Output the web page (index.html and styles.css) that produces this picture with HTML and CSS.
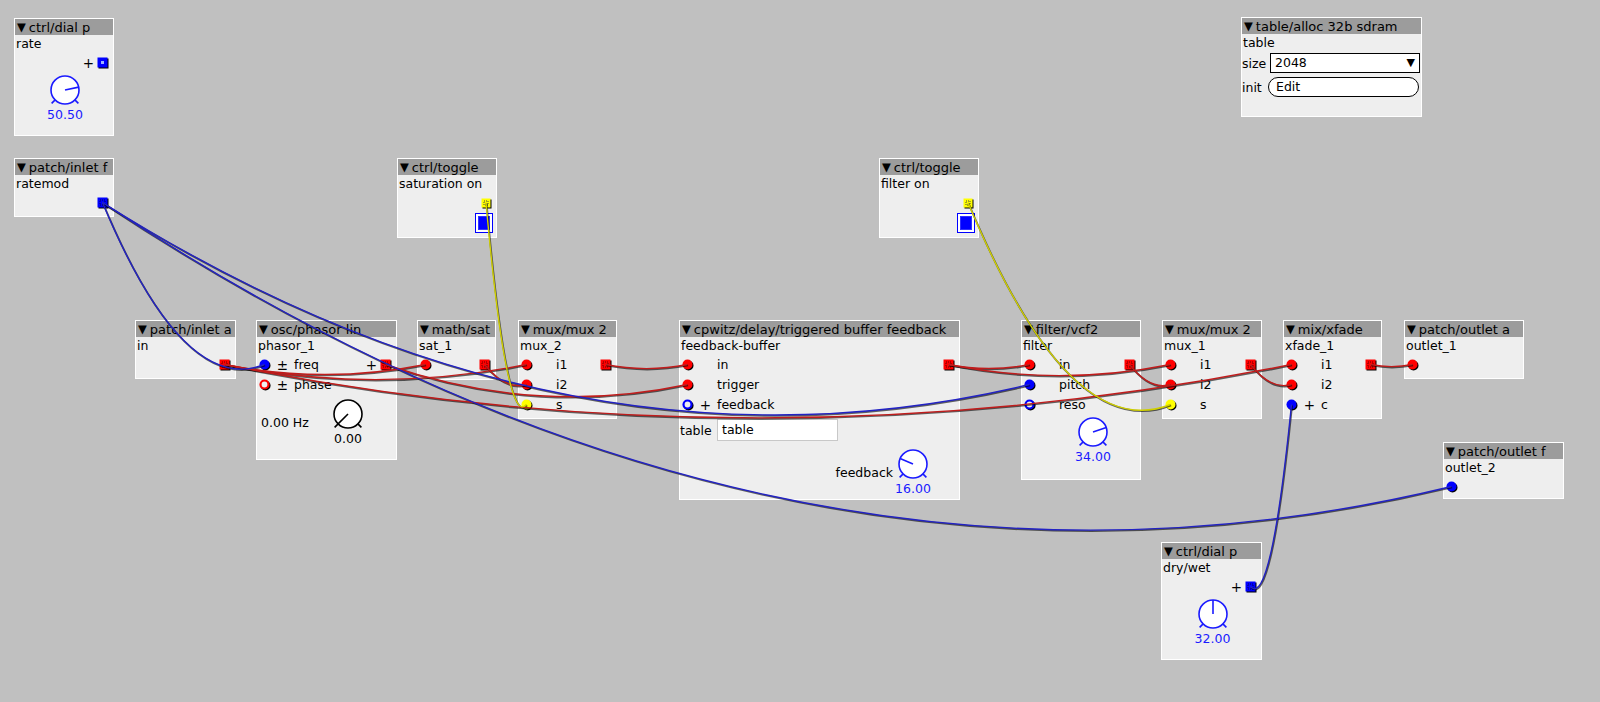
FILE: index.html
```html
<!DOCTYPE html>
<html>
<head>
<meta charset="utf-8">
<link rel="stylesheet" href="styles.css">
</head>
<body>
<div class="canvas">

  <!-- ctrl/dial p : rate -->
  <div class="obj o-dial1">
    <div class="title"><span class="tri">▼</span>ctrl/dial p</div>
    <div class="name">rate</div>
    <div class="row outrow"><span class="osign">+</span><svg class="pout" width="12" height="12"><rect x="1.5" y="1.5" width="10" height="10" fill="#000"/><rect x="0.5" y="0.5" width="10" height="10" fill="#0000ff"/><rect x="4" y="4" width="3" height="3" fill="#9fb4ff"/></svg></div>
    <div class="dialrow">
      <div class="dial">
        <svg width="40" height="34" viewBox="0 0 40 34"><g stroke="#1a1aff" stroke-width="1.6" fill="none"><circle cx="20" cy="16" r="14" fill="#fff"/><line x1="10.1" y1="25.9" x2="6.6" y2="29.4"/><line x1="29.9" y1="25.9" x2="33.4" y2="29.4"/><line x1="20" y1="16" x2="33.7" y2="13.1"/></g></svg>
        <div class="dval blue">50.50</div>
      </div>
    </div>
  </div>

  <!-- patch/inlet f -->
  <div class="obj o-inF">
    <div class="title"><span class="tri">▼</span>patch/inlet f</div>
    <div class="name">ratemod</div>
    <div class="row outrow"><svg class="pout" width="12" height="12"><rect x="1.5" y="1.5" width="10" height="10" fill="#000"/><rect id="inF_o" x="0.5" y="0.5" width="10" height="10" fill="#0000ff"/><rect x="3" y="3" width="5" height="5" fill="none" stroke="#000060" stroke-dasharray="1 1"/></svg></div>
  </div>

  <!-- ctrl/toggle saturation -->
  <div class="obj o-tgS">
    <div class="title"><span class="tri">▼</span>ctrl/toggle</div>
    <div class="name">saturation on</div>
    <div class="row outrow"><svg class="pout small" width="11" height="11"><rect x="1.5" y="1.5" width="9" height="9" fill="#000"/><rect id="tgS_o" x="0.5" y="0.5" width="9" height="9" fill="#ffff00"/><rect x="3" y="3" width="4" height="4" fill="none" stroke="#444" stroke-dasharray="1 1"/></svg></div>
    <div class="tgrow"><div class="toggle"><div class="tgin"></div></div></div>
  </div>

  <!-- ctrl/toggle filter -->
  <div class="obj o-tgF">
    <div class="title"><span class="tri">▼</span>ctrl/toggle</div>
    <div class="name">filter on</div>
    <div class="row outrow"><svg class="pout small" width="11" height="11"><rect x="1.5" y="1.5" width="9" height="9" fill="#000"/><rect id="tgF_o" x="0.5" y="0.5" width="9" height="9" fill="#ffff00"/><rect x="3" y="3" width="4" height="4" fill="none" stroke="#444" stroke-dasharray="1 1"/></svg></div>
    <div class="tgrow"><div class="toggle"><div class="tgin"></div></div></div>
  </div>

  <!-- patch/inlet a -->
  <div class="obj o-inA">
    <div class="title"><span class="tri">▼</span>patch/inlet a</div>
    <div class="name">in</div>
    <div class="row outrow"><svg class="pout" width="12" height="12"><rect x="1.5" y="1.5" width="10" height="10" fill="#000"/><rect id="inA_o" x="0.5" y="0.5" width="10" height="10" fill="#ff0000"/><rect x="3" y="3" width="5" height="5" fill="none" stroke="#600" stroke-dasharray="1 1"/></svg></div>
  </div>

  <!-- osc/phasor lin -->
  <div class="obj o-ph">
    <div class="title"><span class="tri">▼</span>osc/phasor lin</div>
    <div class="name">phasor_1</div>
    <div class="row">
      <svg class="pin" width="12" height="12"><circle cx="6.5" cy="6.5" r="5" fill="#000"/><circle id="ph_freq" cx="5.5" cy="5.5" r="5" fill="#0000ff"/></svg>
      <span class="sign">±</span><span class="lbl">freq</span>
      <span class="osign push">+</span>
      <svg class="pout" width="12" height="12"><rect x="1.5" y="1.5" width="10" height="10" fill="#000"/><rect id="ph_o" x="0.5" y="0.5" width="10" height="10" fill="#ff0000"/><rect x="3" y="3" width="5" height="5" fill="none" stroke="#600" stroke-dasharray="1 1"/></svg>
    </div>
    <div class="row">
      <svg class="pin" width="12" height="12"><circle cx="6.5" cy="6.5" r="4" fill="none" stroke="#000" stroke-width="2.2"/><circle cx="5.5" cy="5.5" r="4" fill="#eee" stroke="#ff0000" stroke-width="2.2"/></svg>
      <span class="sign">±</span><span class="lbl">phase</span>
    </div>
    <div class="phrow">
      <span class="phlbl">0.00 Hz</span>
      <div class="dial">
        <svg width="40" height="34" viewBox="0 0 40 34"><g stroke="#000" stroke-width="1.6" fill="none"><circle cx="20" cy="16" r="14" fill="#fff"/><line x1="10.1" y1="25.9" x2="6.6" y2="29.4"/><line x1="29.9" y1="25.9" x2="33.4" y2="29.4"/><line x1="20" y1="16" x2="10.1" y2="25.9"/></g></svg>
        <div class="dval">0.00</div>
      </div>
    </div>
  </div>

  <!-- math/sat -->
  <div class="obj o-sat">
    <div class="title"><span class="tri">▼</span>math/sat</div>
    <div class="name">sat_1</div>
    <div class="row">
      <svg class="pin" width="12" height="12"><circle cx="6.5" cy="6.5" r="5" fill="#000"/><circle id="sat_i" cx="5.5" cy="5.5" r="5" fill="#ff0000"/></svg>
      <svg class="pout push" width="12" height="12"><rect x="1.5" y="1.5" width="10" height="10" fill="#000"/><rect id="sat_o" x="0.5" y="0.5" width="10" height="10" fill="#ff0000"/><rect x="3" y="3" width="5" height="5" fill="none" stroke="#600" stroke-dasharray="1 1"/></svg>
    </div>
  </div>

  <!-- mux/mux 2 : mux_2 -->
  <div class="obj o-mux2">
    <div class="title"><span class="tri">▼</span>mux/mux 2</div>
    <div class="name">mux_2</div>
    <div class="row">
      <svg class="pin" width="12" height="12"><circle cx="6.5" cy="6.5" r="5" fill="#000"/><circle id="mux2_i1" cx="5.5" cy="5.5" r="5" fill="#ff0000"/></svg>
      <span class="sign"></span><span class="lbl">i1</span>
      <svg class="pout push" width="12" height="12"><rect x="1.5" y="1.5" width="10" height="10" fill="#000"/><rect id="mux2_o" x="0.5" y="0.5" width="10" height="10" fill="#ff0000"/><rect x="3" y="3" width="5" height="5" fill="none" stroke="#600" stroke-dasharray="1 1"/></svg>
    </div>
    <div class="row">
      <svg class="pin" width="12" height="12"><circle cx="6.5" cy="6.5" r="5" fill="#000"/><circle id="mux2_i2" cx="5.5" cy="5.5" r="5" fill="#ff0000"/></svg>
      <span class="sign"></span><span class="lbl">i2</span>
    </div>
    <div class="row">
      <svg class="pin" width="12" height="12"><circle cx="6.5" cy="6.5" r="5" fill="#000"/><circle id="mux2_s" cx="5.5" cy="5.5" r="5" fill="#ffff00"/></svg>
      <span class="sign"></span><span class="lbl">s</span>
    </div>
  </div>

  <!-- cpwitz/delay/triggered buffer feedback -->
  <div class="obj o-cp">
    <div class="title"><span class="tri">▼</span>cpwitz/delay/triggered buffer feedback</div>
    <div class="name">feedback-buffer</div>
    <div class="row">
      <svg class="pin" width="12" height="12"><circle cx="6.5" cy="6.5" r="5" fill="#000"/><circle id="cp_in" cx="5.5" cy="5.5" r="5" fill="#ff0000"/></svg>
      <span class="sign"></span><span class="lbl">in</span>
      <svg class="pout push" width="12" height="12"><rect x="1.5" y="1.5" width="10" height="10" fill="#000"/><rect id="cp_o" x="0.5" y="0.5" width="10" height="10" fill="#ff0000"/><rect x="3" y="3" width="5" height="5" fill="none" stroke="#600" stroke-dasharray="1 1"/></svg>
    </div>
    <div class="row">
      <svg class="pin" width="12" height="12"><circle cx="6.5" cy="6.5" r="5" fill="#000"/><circle id="cp_trig" cx="5.5" cy="5.5" r="5" fill="#ff0000"/></svg>
      <span class="sign"></span><span class="lbl">trigger</span>
    </div>
    <div class="row">
      <svg class="pin" width="12" height="12"><circle cx="6.5" cy="6.5" r="4" fill="none" stroke="#000" stroke-width="2.2"/><circle cx="5.5" cy="5.5" r="4" fill="#eee" stroke="#0000ff" stroke-width="2.2"/></svg>
      <span class="sign">+</span><span class="lbl">feedback</span>
    </div>
    <div class="trow"><span class="tlbl">table</span><div class="tfield">table</div></div>
    <div class="fbrow">
      <span class="fblbl">feedback</span>
      <div class="dial">
        <svg width="40" height="34" viewBox="0 0 40 34"><g stroke="#1a1aff" stroke-width="1.6" fill="none"><circle cx="20" cy="16" r="14" fill="#fff"/><line x1="10.1" y1="25.9" x2="6.6" y2="29.4"/><line x1="29.9" y1="25.9" x2="33.4" y2="29.4"/><line x1="20" y1="16" x2="7.1" y2="10.6"/></g></svg>
        <div class="dval blue">16.00</div>
      </div>
    </div>
  </div>

  <!-- filter/vcf2 -->
  <div class="obj o-flt">
    <div class="title"><span class="tri">▼</span>filter/vcf2</div>
    <div class="name">filter</div>
    <div class="row">
      <svg class="pin" width="12" height="12"><circle cx="6.5" cy="6.5" r="5" fill="#000"/><circle id="flt_in" cx="5.5" cy="5.5" r="5" fill="#ff0000"/></svg>
      <span class="sign"></span><span class="lbl">in</span>
      <svg class="pout push" width="12" height="12"><rect x="1.5" y="1.5" width="10" height="10" fill="#000"/><rect id="flt_o" x="0.5" y="0.5" width="10" height="10" fill="#ff0000"/><rect x="3" y="3" width="5" height="5" fill="none" stroke="#600" stroke-dasharray="1 1"/></svg>
    </div>
    <div class="row">
      <svg class="pin" width="12" height="12"><circle cx="6.5" cy="6.5" r="5" fill="#000"/><circle id="flt_pitch" cx="5.5" cy="5.5" r="5" fill="#0000ff"/></svg>
      <span class="sign"></span><span class="lbl">pitch</span>
    </div>
    <div class="row">
      <svg class="pin" width="12" height="12"><circle cx="6.5" cy="6.5" r="4" fill="none" stroke="#000" stroke-width="2.2"/><circle cx="5.5" cy="5.5" r="4" fill="#eee" stroke="#0000ff" stroke-width="2.2"/></svg>
      <span class="sign"></span><span class="lbl">reso</span>
    </div>
    <div class="fltdial">
      <div class="dial">
        <svg width="40" height="34" viewBox="0 0 40 34"><g stroke="#1a1aff" stroke-width="1.6" fill="none"><circle cx="20" cy="16" r="14" fill="#fff"/><line x1="10.1" y1="25.9" x2="6.6" y2="29.4"/><line x1="29.9" y1="25.9" x2="33.4" y2="29.4"/><line x1="20" y1="16" x2="33.3" y2="11.6"/></g></svg>
        <div class="dval blue">34.00</div>
      </div>
    </div>
  </div>

  <!-- mux/mux 2 : mux_1 -->
  <div class="obj o-mux1">
    <div class="title"><span class="tri">▼</span>mux/mux 2</div>
    <div class="name">mux_1</div>
    <div class="row">
      <svg class="pin" width="12" height="12"><circle cx="6.5" cy="6.5" r="5" fill="#000"/><circle id="mux1_i1" cx="5.5" cy="5.5" r="5" fill="#ff0000"/></svg>
      <span class="sign"></span><span class="lbl">i1</span>
      <svg class="pout push" width="12" height="12"><rect x="1.5" y="1.5" width="10" height="10" fill="#000"/><rect id="mux1_o" x="0.5" y="0.5" width="10" height="10" fill="#ff0000"/><rect x="3" y="3" width="5" height="5" fill="none" stroke="#600" stroke-dasharray="1 1"/></svg>
    </div>
    <div class="row">
      <svg class="pin" width="12" height="12"><circle cx="6.5" cy="6.5" r="5" fill="#000"/><circle id="mux1_i2" cx="5.5" cy="5.5" r="5" fill="#ff0000"/></svg>
      <span class="sign"></span><span class="lbl">i2</span>
    </div>
    <div class="row">
      <svg class="pin" width="12" height="12"><circle cx="6.5" cy="6.5" r="5" fill="#000"/><circle id="mux1_s" cx="5.5" cy="5.5" r="5" fill="#ffff00"/></svg>
      <span class="sign"></span><span class="lbl">s</span>
    </div>
  </div>

  <!-- mix/xfade -->
  <div class="obj o-xf">
    <div class="title"><span class="tri">▼</span>mix/xfade</div>
    <div class="name">xfade_1</div>
    <div class="row">
      <svg class="pin" width="12" height="12"><circle cx="6.5" cy="6.5" r="5" fill="#000"/><circle id="xf_i1" cx="5.5" cy="5.5" r="5" fill="#ff0000"/></svg>
      <span class="sign"></span><span class="lbl">i1</span>
      <svg class="pout push" width="12" height="12"><rect x="1.5" y="1.5" width="10" height="10" fill="#000"/><rect id="xf_o" x="0.5" y="0.5" width="10" height="10" fill="#ff0000"/><rect x="3" y="3" width="5" height="5" fill="none" stroke="#600" stroke-dasharray="1 1"/></svg>
    </div>
    <div class="row">
      <svg class="pin" width="12" height="12"><circle cx="6.5" cy="6.5" r="5" fill="#000"/><circle id="xf_i2" cx="5.5" cy="5.5" r="5" fill="#ff0000"/></svg>
      <span class="sign"></span><span class="lbl">i2</span>
    </div>
    <div class="row">
      <svg class="pin" width="12" height="12"><circle cx="6.5" cy="6.5" r="5" fill="#000"/><circle id="xf_c" cx="5.5" cy="5.5" r="5" fill="#0000ff"/></svg>
      <span class="sign">+</span><span class="lbl">c</span>
    </div>
  </div>

  <!-- patch/outlet a -->
  <div class="obj o-outA">
    <div class="title"><span class="tri">▼</span>patch/outlet a</div>
    <div class="name">outlet_1</div>
    <div class="row">
      <svg class="pin" width="12" height="12"><circle cx="6.5" cy="6.5" r="5" fill="#000"/><circle id="outA_i" cx="5.5" cy="5.5" r="5" fill="#ff0000"/></svg>
    </div>
  </div>

  <!-- table/alloc 32b sdram -->
  <div class="obj o-tbl">
    <div class="title"><span class="tri">▼</span>table/alloc 32b sdram</div>
    <div class="name">table</div>
    <div class="frow frow1"><span class="flbl">size</span><div class="combo"><span>2048</span><span class="carrow">▼</span></div></div>
    <div class="frow frow2"><span class="flbl">init</span><div class="btn">Edit</div></div>
  </div>

  <!-- patch/outlet f -->
  <div class="obj o-outF">
    <div class="title"><span class="tri">▼</span>patch/outlet f</div>
    <div class="name">outlet_2</div>
    <div class="row">
      <svg class="pin" width="12" height="12"><circle cx="6.5" cy="6.5" r="5" fill="#000"/><circle id="outF_i" cx="5.5" cy="5.5" r="5" fill="#0000ff"/></svg>
    </div>
  </div>

  <!-- ctrl/dial p : dry/wet -->
  <div class="obj o-dw">
    <div class="title"><span class="tri">▼</span>ctrl/dial p</div>
    <div class="name">dry/wet</div>
    <div class="row outrow"><span class="osign">+</span><svg class="pout" width="12" height="12"><rect x="1.5" y="1.5" width="10" height="10" fill="#000"/><rect id="dw_o" x="0.5" y="0.5" width="10" height="10" fill="#0000ff"/><rect x="3" y="3" width="5" height="5" fill="none" stroke="#000060" stroke-dasharray="1 1"/></svg></div>
    <div class="dialrow">
      <div class="dial">
        <svg width="40" height="34" viewBox="0 0 40 34"><g stroke="#1a1aff" stroke-width="1.6" fill="none"><circle cx="20" cy="16" r="14" fill="#fff"/><line x1="10.1" y1="25.9" x2="6.6" y2="29.4"/><line x1="29.9" y1="25.9" x2="33.4" y2="29.4"/><line x1="20" y1="16" x2="20" y2="2"/></g></svg>
        <div class="dval blue">32.00</div>
      </div>
    </div>
  </div>

  <svg id="wires" class="wires" width="1600" height="702"></svg>
</div>
<script src="script.js"></script>
</body>
</html>
```

FILE: styles.css
```css
* { box-sizing: border-box; }
html, body { margin: 0; padding: 0; }
body {
  width: 1600px;
  height: 702px;
  overflow: hidden;
  background: #c0c0c0;
  font-family: "DejaVu Sans", "Liberation Sans", sans-serif;
  font-size: 12.5px;
  color: #000;
}
.canvas { position: relative; width: 1600px; height: 702px; }

.obj {
  position: absolute;
  background: #eeeeee;
  border: 1px solid #ffffff;
  display: flex;
  flex-direction: column;
}
.title {
  height: 16px;
  line-height: 16px;
  background: #9c9c9c;
  padding-left: 2px;
  white-space: nowrap;
  overflow: hidden;
  font-size: 13px;
}
.tri { font-size: 11.5px; margin-right: 3px; vertical-align: 1px; }
.name {
  height: 18px;
  line-height: 18px;
  padding-left: 1px;
  white-space: nowrap;
}
.row {
  height: 20px;
  display: flex;
  align-items: center;
  white-space: nowrap;
}
.pin { margin-left: 2px; flex: none; }
.pout { margin-right: 4px; flex: none; }
.pout.small { margin-right: 4px; }
.push { margin-left: auto; }
.sign { width: 23px; text-align: center; flex: none; font-size: 13.5px; }
.lbl { line-height: 20px; }
.outrow { justify-content: flex-end; }
.osign { margin-right: 3px; font-size: 13.5px; }

/* dials */
.dial { width: 40px; display: flex; flex-direction: column; align-items: center; flex: none; }
.dial svg { display: block; }
.dval { height: 14px; line-height: 14px; white-space: nowrap; }
.blue { color: #1a1aff; }
.dialrow { display: flex; justify-content: center; margin-top: 1px; padding-left: 2px; }

/* toggles */
.tgrow { display: flex; justify-content: flex-end; padding-right: 3px; }
.toggle {
  width: 18px; height: 20px;
  border: 1px solid #0000ff;
  background: #fff;
  padding: 2px;
}
.tgin { width: 100%; height: 100%; background: #0000ff; border: 1px solid #3030ff; }

/* phasor */
.phrow { display: flex; align-items: flex-start; margin-top: 3px; }
.phlbl { width: 71px; padding-left: 4px; margin-top: 18px; line-height: 14px; white-space: nowrap; flex: none; }

/* cpwitz */
.trow { display: flex; align-items: center; margin-top: 4px; height: 22px; }
.tlbl { width: 37px; line-height: 22px; padding-top: 2px; }
.tfield {
  width: 121px; height: 22px;
  background: #fff;
  border: 1px solid #c8c8c8;
  line-height: 20px;
  padding-left: 4px;
}
.fbrow { display: flex; justify-content: flex-end; align-items: flex-start; margin-top: 7px; padding-right: 26px; }
.fblbl { margin-top: 18px; line-height: 14px; }

/* filter */
.fltdial { display: flex; margin-top: 1px; padding-left: 51px; }

/* table alloc */
.frow { display: flex; align-items: center; }
.frow1 { margin-top: 1px; height: 20px; }
.frow2 { margin-top: 4px; height: 20px; }
.flbl { width: 28px; padding-left: 0; }
.frow2 .flbl { width: 26px; }
.combo {
  width: 150px; height: 20px;
  background: #fff;
  border: 1px solid #000;
  display: flex; align-items: center; justify-content: space-between;
  padding: 0 4px 0 4px;
  line-height: 18px;
}
.carrow { font-size: 11px; }
.btn {
  width: 151px; height: 20px;
  background: #fff;
  border: 1px solid #000;
  border-radius: 10px;
  line-height: 18px;
  padding-left: 7px;
}

/* positions on the patch canvas */
.o-dial1 { left: 14px; top: 18px; width: 100px; height: 118px; }
.o-inF   { left: 14px; top: 158px; width: 100px; height: 59px; }
.o-tgS   { left: 397px; top: 158px; width: 100px; height: 80px; }
.o-tgF   { left: 879px; top: 158px; width: 100px; height: 80px; }
.o-inA   { left: 135px; top: 320px; width: 101px; height: 59px; }
.o-ph    { left: 256px; top: 320px; width: 141px; height: 140px; }
.o-sat   { left: 417px; top: 320px; width: 79px; height: 60px; }
.o-mux2  { left: 518px; top: 320px; width: 99px; height: 99px; }
.o-cp    { left: 679px; top: 320px; width: 281px; height: 180px; }
.o-flt   { left: 1021px; top: 320px; width: 120px; height: 160px; }
.o-mux1  { left: 1162px; top: 320px; width: 100px; height: 99px; }
.o-xf    { left: 1283px; top: 320px; width: 99px; height: 99px; }
.o-outA  { left: 1404px; top: 320px; width: 120px; height: 59px; }
.o-tbl   { left: 1241px; top: 17px; width: 181px; height: 100px; }
.o-outF  { left: 1443px; top: 442px; width: 121px; height: 57px; }
.o-dw    { left: 1161px; top: 542px; width: 101px; height: 118px; }

.wires {
  position: absolute;
  left: 0; top: 0;
  pointer-events: none;
}
```

FILE: script.js
```js
(function () {
  var wires = [
    ['inA_o', 'sat_i', 'r'], ['inA_o', 'mux2_i1', 'r'], ['inA_o', 'xf_i1', 'r'],
    ['ph_o', 'cp_trig', 'r'], ['sat_o', 'mux2_i2', 'r'], ['mux2_o', 'cp_in', 'r'],
    ['cp_o', 'flt_in', 'r'], ['cp_o', 'mux1_i1', 'r'], ['flt_o', 'mux1_i2', 'r'],
    ['mux1_o', 'xf_i2', 'r'], ['xf_o', 'outA_i', 'r'],
    ['inF_o', 'ph_freq', 'b'], ['inF_o', 'flt_pitch', 'b'], ['inF_o', 'outF_i', 'b'],
    ['dw_o', 'xf_c', 'b'],
    ['tgS_o', 'mux2_s', 'y'], ['tgF_o', 'mux1_s', 'y']
  ];
  var colors = { r: '#c01c1c', b: '#2222c4', y: '#d0d000' };
  var NS = 'http://www.w3.org/2000/svg';

  function center(id) {
    var r = document.getElementById(id).getBoundingClientRect();
    return [r.left + r.width / 2, r.top + r.height / 2];
  }

  function draw() {
    var svg = document.getElementById('wires');
    while (svg.firstChild) svg.removeChild(svg.firstChild);
    var shadows = document.createElementNS(NS, 'g');
    var lines = document.createElementNS(NS, 'g');
    shadows.setAttribute('transform', 'translate(0.6 0.9)');
    svg.appendChild(shadows);
    svg.appendChild(lines);
    wires.forEach(function (w) {
      var a = center(w[0]), b = center(w[1]);
      var cx = (a[0] + b[0]) / 2;
      var cy = Math.max(a[1], b[1]) + 0.1 * (Math.abs(b[0] - a[0]) + Math.abs(b[1] - a[1]));
      var d = 'M' + a[0] + ' ' + a[1] + ' Q' + cx + ' ' + cy + ' ' + b[0] + ' ' + b[1];
      var s = document.createElementNS(NS, 'path');
      s.setAttribute('d', d);
      s.setAttribute('fill', 'none');
      s.setAttribute('stroke', 'rgba(0,0,0,0.6)');
      s.setAttribute('stroke-width', '1.8');
      shadows.appendChild(s);
      var p = document.createElementNS(NS, 'path');
      p.setAttribute('d', d);
      p.setAttribute('fill', 'none');
      p.setAttribute('stroke', colors[w[2]]);
      p.setAttribute('stroke-width', '1.4');
      lines.appendChild(p);
    });
  }
  draw();
  if (document.fonts && document.fonts.ready) document.fonts.ready.then(draw);
  window.addEventListener('load', draw);
})();
```
